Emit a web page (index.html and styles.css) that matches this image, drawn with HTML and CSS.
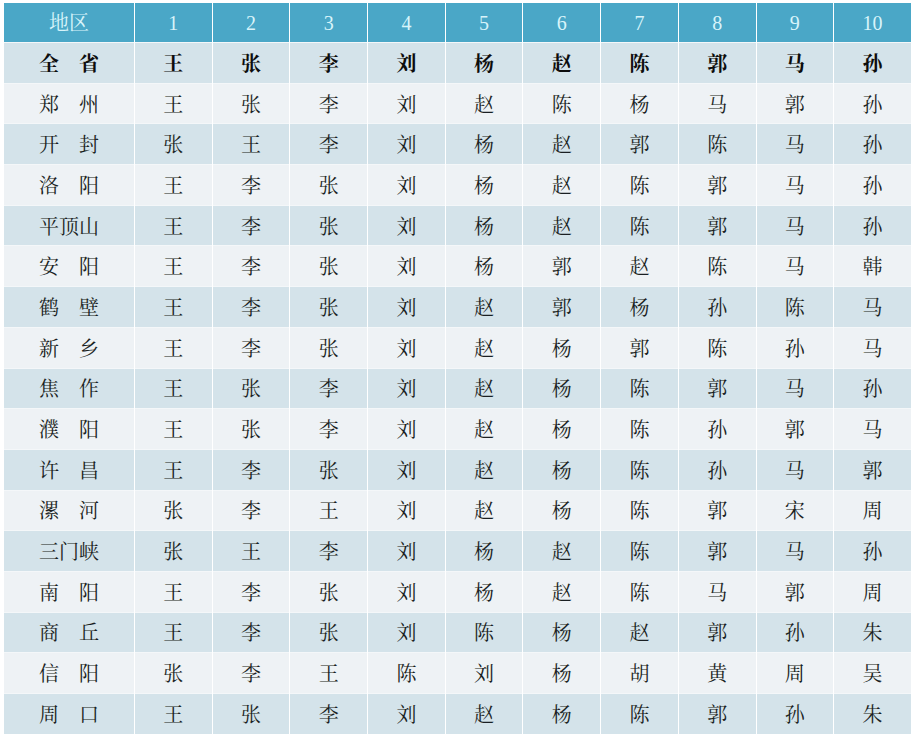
FILE: index.html
```html
<!DOCTYPE html>
<html lang="zh">
<head>
<meta charset="utf-8">
<title>地区排名</title>
<link rel="stylesheet" href="styles.css">
</head>
<body>
<table class="rank">
<colgroup><col class="c-area"><col><col><col><col><col><col><col><col><col><col></colgroup>
<thead>
<tr><th>地区</th><th>1</th><th>2</th><th>3</th><th>4</th><th>5</th><th>6</th><th>7</th><th>8</th><th>9</th><th>10</th></tr>
</thead>
<tbody>
<tr class="alt total"><td>全　省</td><td>王</td><td>张</td><td>李</td><td>刘</td><td>杨</td><td>赵</td><td>陈</td><td>郭</td><td>马</td><td>孙</td></tr>
<tr><td>郑　州</td><td>王</td><td>张</td><td>李</td><td>刘</td><td>赵</td><td>陈</td><td>杨</td><td>马</td><td>郭</td><td>孙</td></tr>
<tr class="alt"><td>开　封</td><td>张</td><td>王</td><td>李</td><td>刘</td><td>杨</td><td>赵</td><td>郭</td><td>陈</td><td>马</td><td>孙</td></tr>
<tr><td>洛　阳</td><td>王</td><td>李</td><td>张</td><td>刘</td><td>杨</td><td>赵</td><td>陈</td><td>郭</td><td>马</td><td>孙</td></tr>
<tr class="alt"><td>平顶山</td><td>王</td><td>李</td><td>张</td><td>刘</td><td>杨</td><td>赵</td><td>陈</td><td>郭</td><td>马</td><td>孙</td></tr>
<tr><td>安　阳</td><td>王</td><td>李</td><td>张</td><td>刘</td><td>杨</td><td>郭</td><td>赵</td><td>陈</td><td>马</td><td>韩</td></tr>
<tr class="alt"><td>鹤　壁</td><td>王</td><td>李</td><td>张</td><td>刘</td><td>赵</td><td>郭</td><td>杨</td><td>孙</td><td>陈</td><td>马</td></tr>
<tr><td>新　乡</td><td>王</td><td>李</td><td>张</td><td>刘</td><td>赵</td><td>杨</td><td>郭</td><td>陈</td><td>孙</td><td>马</td></tr>
<tr class="alt"><td>焦　作</td><td>王</td><td>张</td><td>李</td><td>刘</td><td>赵</td><td>杨</td><td>陈</td><td>郭</td><td>马</td><td>孙</td></tr>
<tr><td>濮　阳</td><td>王</td><td>张</td><td>李</td><td>刘</td><td>赵</td><td>杨</td><td>陈</td><td>孙</td><td>郭</td><td>马</td></tr>
<tr class="alt"><td>许　昌</td><td>王</td><td>李</td><td>张</td><td>刘</td><td>赵</td><td>杨</td><td>陈</td><td>孙</td><td>马</td><td>郭</td></tr>
<tr><td>漯　河</td><td>张</td><td>李</td><td>王</td><td>刘</td><td>赵</td><td>杨</td><td>陈</td><td>郭</td><td>宋</td><td>周</td></tr>
<tr class="alt"><td>三门峡</td><td>张</td><td>王</td><td>李</td><td>刘</td><td>杨</td><td>赵</td><td>陈</td><td>郭</td><td>马</td><td>孙</td></tr>
<tr><td>南　阳</td><td>王</td><td>李</td><td>张</td><td>刘</td><td>杨</td><td>赵</td><td>陈</td><td>马</td><td>郭</td><td>周</td></tr>
<tr class="alt"><td>商　丘</td><td>王</td><td>李</td><td>张</td><td>刘</td><td>陈</td><td>杨</td><td>赵</td><td>郭</td><td>孙</td><td>朱</td></tr>
<tr><td>信　阳</td><td>张</td><td>李</td><td>王</td><td>陈</td><td>刘</td><td>杨</td><td>胡</td><td>黄</td><td>周</td><td>吴</td></tr>
<tr class="alt"><td>周　口</td><td>王</td><td>张</td><td>李</td><td>刘</td><td>赵</td><td>杨</td><td>陈</td><td>郭</td><td>孙</td><td>朱</td></tr>
</tbody>
</table>
</body>
</html>
```
FILE: styles.css
```css
html, body {
  margin: 0;
  padding: 0;
  background: #ffffff;
}
body {
  padding: 3px 1px 0 3px;
  font-family: "Noto Serif CJK SC", "Liberation Serif", "Noto Sans CJK SC", serif;
}
.rank {
  width: 909px;
  table-layout: fixed;
  border-collapse: collapse;
}
.c-area {
  width: 131px;
}
.rank th,
.rank td {
  border-left: 1px solid #ffffff;
  border-right: 1px solid #ffffff;
  text-align: center;
  padding: 0;
  font-size: 20px;
  line-height: 24px;
  color: #1a1f23;
}
.rank th {
  height: 39px;
  background: #4aa7c7;
  color: #d8f4fa;
  font-weight: normal;
  font-family: "Liberation Serif", "Noto Serif CJK SC", "Noto Sans CJK SC", serif;
}
.rank td {
  height: 39.7px;
  border-top: 1px solid #f4f7f9;
  background: #eef2f5;
}
.rank tr.alt td {
  background: #d4e3ea;
}
.rank tr.total td {
  font-weight: bold;
  color: #0d0d0d;
}
```
